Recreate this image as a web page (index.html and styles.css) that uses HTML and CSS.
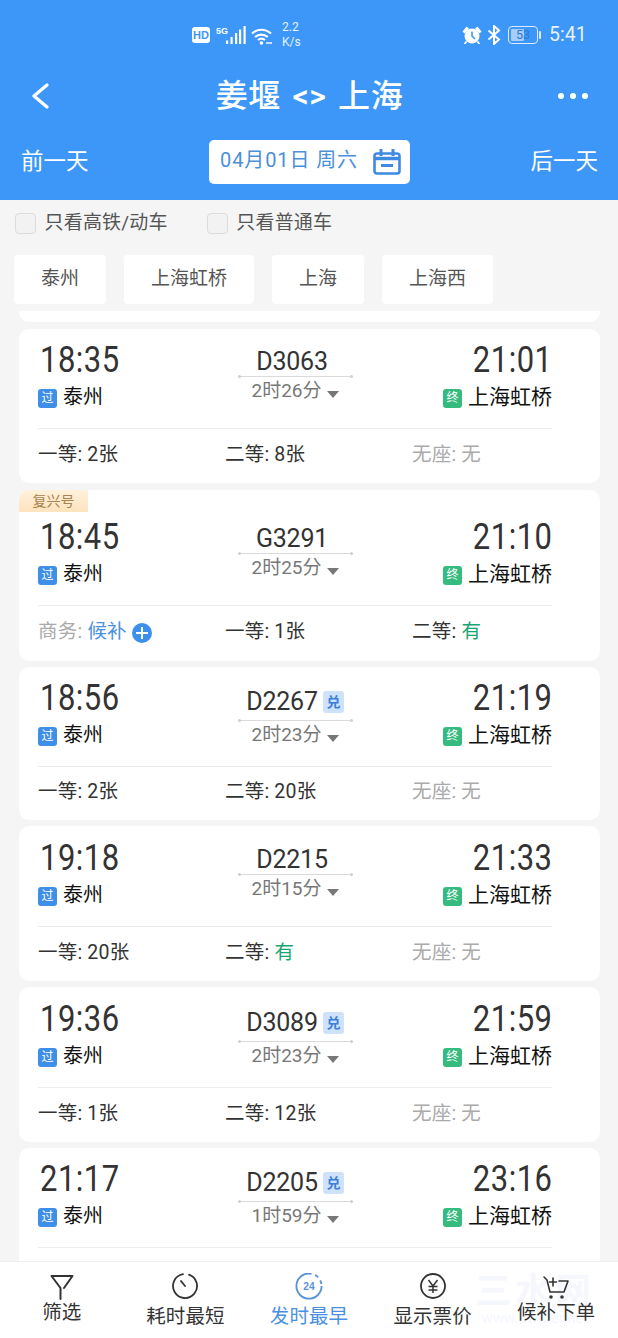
FILE: index.html
```html
<!DOCTYPE html>
<html lang="zh-CN">
<head>
<meta charset="utf-8">
<title>姜堰 &lt;&gt; 上海</title>
<link rel="stylesheet" href="styles.css">
</head>
<body>
<div class="app">
  <header class="header">
    <div class="status">
      <div class="status-left">
        <span class="hd">HD</span>
        <svg class="ic-signal" viewBox="0 0 30 18" width="30" height="18"><text x="0" y="7.500" class="five-g">5G</text><path d="M10 14.500h2.200V18H10zM14.500 11h2.200v7h-2.200zM19 7h2.200v11H19zM23 3.500h2.200V18H23zM27.500 0h2.200v18h-2.200z" fill="#fff"/></svg>
        <svg class="ic-wifi" viewBox="0 0 22 18" width="22" height="18" fill="none" stroke="#fff" stroke-width="2.200"><path d="M1 6.500c5.500-5 13-5 19 0M4 10c3.800-3.300 9-3.300 12.800 0M7 13c2-1.600 5-1.600 7 0"/><circle cx="10.500" cy="16" r="1.800" fill="#fff" stroke="none"/><path d="M15 16h6" stroke-width="1.400"/></svg>
        <div class="speed"><span>2.2</span><span>K/s</span></div>
      </div>
      <div class="status-right">
        <svg class="ic-alarm" viewBox="0 0 20 18" width="20" height="18"><path d="M0.500 5.500l4-5 2.500 2-4.500 5zM19.500 5.500l-4-5-2.500 2 4.500 5z" fill="#fff"/><circle cx="10" cy="10" r="7.500" fill="#fff"/><path d="M10 5.500V10l3 3" fill="none" stroke="#3d97f9" stroke-width="1.600"/><path d="M4.500 15.500l-2 2.500M15.500 15.500l2 2.500" stroke="#fff" stroke-width="1.800"/></svg>
        <svg class="ic-bt" viewBox="0 0 14 20" width="14" height="20" fill="none" stroke="#fff" stroke-width="2"><path d="M1.500 5.500L12 14.500 7 19V1l5 4.500-10.500 9"/></svg>
        <div class="battery"><div class="battery-body"><div class="battery-fill"></div><span>53</span></div><i class="battery-nub"></i></div>
        <span class="clock">5:41</span>
      </div>
    </div>
    <div class="titlebar">
      <svg class="ic-back" viewBox="0 0 18 26" width="18" height="26" fill="none" stroke="#fff" stroke-width="3.200" stroke-linecap="round" stroke-linejoin="round"><path d="M16 2L3 13l13 11"/></svg>
      <h1 class="title">姜堰 &lt;&gt; 上海</h1>
      <div class="more"><i></i><i></i><i></i></div>
    </div>
    <div class="datebar">
      <span class="day-link">前一天</span>
      <div class="date-box">
        <span class="date-text">04月01日 周六</span>
        <svg viewBox="0 0 28 26" width="28" height="26" fill="none" stroke="#3f8ae0" stroke-width="2.600"><rect x="1.500" y="4.500" width="25" height="20" rx="2.500"/><path d="M1.500 9.500h25" stroke-width="3.500"/><path d="M8 0v7M20 0v7" stroke-width="3"/><path d="M8 16.500h12" stroke-width="3"/></svg>
      </div>
      <span class="day-link">后一天</span>
    </div>
  </header>

  <div class="filters">
    <label class="check"><i class="box"></i>只看高铁/动车</label>
    <label class="check"><i class="box"></i>只看普通车</label>
  </div>

  <div class="tabs">
    <span class="tab">泰州</span>
    <span class="tab">上海虹桥</span>
    <span class="tab">上海</span>
    <span class="tab">上海西</span>
  </div>

  <main class="list">
    <div class="card-tail"></div>

    <article class="card">
      <div class="route">
        <div class="end"><div class="time">18:35</div><div class="station"><b class="mark pass">过</b>泰州</div></div>
        <div class="mid">
          <div class="train">D3063</div>
          <div class="duration">2时26分<i class="caret"></i></div>
        </div>
        <div class="end right"><div class="time">21:01</div><div class="station"><b class="mark final">终</b>上海虹桥</div></div>
      </div>
      <div class="seats"><span>一等: 2张</span><span>二等: 8张</span><span class="none">无座: 无</span></div>
    </article>

    <article class="card fuxing">
      <span class="tag">复兴号</span>
      <div class="route">
        <div class="end"><div class="time">18:45</div><div class="station"><b class="mark pass">过</b>泰州</div></div>
        <div class="mid">
          <div class="train">G3291</div>
          <div class="duration">2时25分<i class="caret"></i></div>
        </div>
        <div class="end right"><div class="time">21:10</div><div class="station"><b class="mark final">终</b>上海虹桥</div></div>
      </div>
      <div class="seats">
        <span class="none">商务: <em class="wait">候补</em><i class="plus"></i></span>
        <span>一等: 1张</span>
        <span>二等: <em class="have">有</em></span>
      </div>
    </article>

    <article class="card compact">
      <div class="route">
        <div class="end"><div class="time">18:56</div><div class="station"><b class="mark pass">过</b>泰州</div></div>
        <div class="mid">
          <div class="train with-badge">D2267<b class="redeem">兑</b></div>
          <div class="duration">2时23分<i class="caret"></i></div>
        </div>
        <div class="end right"><div class="time">21:19</div><div class="station"><b class="mark final">终</b>上海虹桥</div></div>
      </div>
      <div class="seats"><span>一等: 2张</span><span>二等: 20张</span><span class="none">无座: 无</span></div>
    </article>

    <article class="card low">
      <div class="route">
        <div class="end"><div class="time">19:18</div><div class="station"><b class="mark pass">过</b>泰州</div></div>
        <div class="mid">
          <div class="train">D2215</div>
          <div class="duration">2时15分<i class="caret"></i></div>
        </div>
        <div class="end right"><div class="time">21:33</div><div class="station"><b class="mark final">终</b>上海虹桥</div></div>
      </div>
      <div class="seats"><span>一等: 20张</span><span>二等: <em class="have">有</em></span><span class="none">无座: 无</span></div>
    </article>

    <article class="card low">
      <div class="route">
        <div class="end"><div class="time">19:36</div><div class="station"><b class="mark pass">过</b>泰州</div></div>
        <div class="mid">
          <div class="train with-badge">D3089<b class="redeem">兑</b></div>
          <div class="duration">2时23分<i class="caret"></i></div>
        </div>
        <div class="end right"><div class="time">21:59</div><div class="station"><b class="mark final">终</b>上海虹桥</div></div>
      </div>
      <div class="seats"><span>一等: 1张</span><span>二等: 12张</span><span class="none">无座: 无</span></div>
    </article>

    <article class="card">
      <div class="route">
        <div class="end"><div class="time">21:17</div><div class="station"><b class="mark pass">过</b>泰州</div></div>
        <div class="mid">
          <div class="train with-badge">D2205<b class="redeem">兑</b></div>
          <div class="duration">1时59分<i class="caret"></i></div>
        </div>
        <div class="end right"><div class="time">23:16</div><div class="station"><b class="mark final">终</b>上海虹桥</div></div>
      </div>
      <div class="seats"></div>
    </article>
  </main>

  <nav class="tabbar">
    <div class="watermark"><b>三水网</b><span>www.3water.net</span></div>
    <div class="nav-item raised">
      <svg viewBox="0 0 24 28" width="24" height="28" fill="none" stroke="#333" stroke-width="2" stroke-linejoin="round" stroke-linecap="round"><path d="M1.500 3h21L14 15M1.500 3L10.500 15v11"/></svg>
      <span>筛选</span>
    </div>
    <div class="nav-item">
      <svg viewBox="0 0 28 28" width="28" height="28" fill="none" stroke="#333" stroke-width="1.800" stroke-linecap="round"><path d="M12 1.200A12 12 0 1 0 18 1.700"/><path d="M10 8l4 5"/></svg>
      <span>耗时最短</span>
    </div>
    <div class="nav-item active">
      <svg viewBox="0 0 30 30" width="30" height="30" fill="none"><circle cx="15" cy="14" r="13.500" stroke="#5b93d8" stroke-width="2" stroke-dasharray="66 4 4 4 4 4"/><text x="15" y="18.500" class="nav-24">24</text></svg>
      <span>发时最早</span>
    </div>
    <div class="nav-item">
      <svg viewBox="0 0 28 28" width="28" height="28" fill="none" stroke="#333" stroke-width="1.800"><circle cx="14" cy="13" r="12"/><path d="M9.500 7l4.500 6 4.500-6M9.500 13.500h9M9.500 17h9M14 13v7" stroke-width="1.500"/></svg>
      <span>显示票价</span>
    </div>
    <div class="nav-item raised">
      <svg viewBox="0 0 28 28" width="28" height="28" fill="none" stroke="#333" stroke-width="1.600" stroke-linecap="round" stroke-linejoin="round"><path d="M2 4l3 3 3 12h14l4-11h-9"/><path d="M11 5v8M7.500 9h7"/><circle cx="9" cy="24" r="1" fill="#333"/><circle cx="20" cy="24" r="1" fill="#333"/></svg>
      <span>候补下单</span>
    </div>
  </nav>
</div>
</body>
</html>
```
FILE: styles.css
```css
* { box-sizing: border-box; }

html, body { margin: 0; padding: 0; }

body {
  font-family: Roboto, "Noto Sans CJK SC", sans-serif;
  background: #f5f5f5;
  color: #333;
}

.app {
  width: 618px;
  height: 1338px;
  display: flex;
  flex-direction: column;
  overflow: hidden;
}

/* Blue header: status bar, title row, date row */
.header {
  background: #3d97f9;
  color: #fff;
  height: 200px;
  flex: none;
}

.status {
  height: 68px;
  padding: 21px 34px 0 192px;
  display: flex;
  justify-content: space-between;
  align-items: flex-start;
}

.status-left { display: flex; align-items: flex-start; padding-top: 5px; }
.status-right { display: flex; align-items: center; height: 27px; }

.hd {
  width: 18px;
  height: 16px;
  margin-top: 1px;
  background: #fff;
  color: #3d97f9;
  border-radius: 3px;
  font: 700 11px/16px "Liberation Sans", sans-serif;
  text-align: center;
}

.ic-signal { margin-left: 6px; }
.five-g { font: 700 9px "Liberation Sans", sans-serif; fill: #fff; }
.ic-wifi { margin-left: 5px; margin-top: 1px; }

.speed {
  margin: -6px 0 0 9px;
  width: 18px;
  display: flex;
  flex-direction: column;
  font-size: 12px;
  line-height: 14px;
  color: #e6f1ff;
  gap: 1px;
}

.ic-alarm { margin-right: 5px; }
.ic-bt { margin-right: 7px; }

.battery { display: flex; align-items: center; }

.battery-body {
  position: relative;
  width: 30px;
  height: 18px;
  border: 1.5px solid #dcebff;
  border-radius: 4px;
  padding: 2px;
}

.battery-fill { width: 55%; height: 100%; background: #a8cdf8; border-radius: 1px; }

.battery-body span {
  position: absolute;
  inset: 0;
  text-align: center;
  font-size: 12.500px;
  line-height: 15px;
  color: #2f79cf;
}

.battery-nub { width: 2px; height: 8px; margin-left: 1px; background: #dcebff; border-radius: 1px; }

.clock { margin-left: 8px; width: 35px; font-size: 19.500px; color: #e6f1ff; white-space: nowrap; }

.titlebar {
  height: 56px;
  padding: 0 30px 0 31px;
  display: grid;
  grid-template-columns: 1fr auto 1fr;
  align-items: center;
}

.title {
  margin: 0;
  font-size: 32px;
  font-weight: 500;
  line-height: 56px;
  letter-spacing: .6px;
  word-spacing: 3px;
}

.more { display: flex; gap: 6px; justify-self: end; }
.more i { width: 6px; height: 6px; border-radius: 50%; background: #fff; }

.datebar {
  margin-top: 16px;
  height: 44px;
  padding: 0 20px 0 21px;
  display: flex;
  align-items: center;
  justify-content: space-between;
}

.day-link { font-size: 22.500px; line-height: 42px; height: 44px; }

.date-box {
  width: 201px;
  height: 44px;
  padding: 0 9px 0 11px;
  background: #fff;
  border-radius: 5px;
  display: flex;
  align-items: center;
  justify-content: space-between;
}

.date-text {
  font-size: 20px;
  line-height: 40px;
  height: 44px;
  letter-spacing: .9px;
  color: #4a8fd8;
  white-space: nowrap;
}

/* Train type checkboxes */
.filters {
  height: 55px;
  flex: none;
  padding: 0 15px 9px;
  display: flex;
  align-items: center;
  gap: 39px;
}

.check {
  display: flex;
  align-items: center;
  gap: 8.500px;
  font-size: 19px;
  line-height: 22px;
  height: 24px;
  letter-spacing: .2px;
  color: #555;
  white-space: nowrap;
}

.box {
  width: 21px;
  height: 21px;
  background: #f2f2f2;
  border: 1.5px solid #dcdcdc;
  border-radius: 4px;
}

/* Station shortcuts */
.tabs {
  flex: none;
  height: 49px;
  padding-left: 14px;
  display: flex;
  gap: 18px;
}

.tab {
  padding: 0 27px;
  background: #fff;
  border-radius: 4px;
  font-size: 19px;
  line-height: 47px;
  color: #555;
  white-space: nowrap;
}

/* Scrolling list of trains */
.list {
  flex: 1;
  min-height: 0;
  margin-top: 7px;
  padding: 0 18px 0 19px;
  overflow: hidden;
}

.card-tail {
  height: 11px;
  background: #fff;
  border-radius: 0 0 10px 10px;
}

.card {
  position: relative;
  margin-top: 6.500px;
  padding: 12px 48px 0 19px;
  height: 154.500px;
  background: #fff;
  border-radius: 10px;
}

.card.fuxing { padding-top: 28.500px; height: 171px; }
.card.compact { height: 152.500px; }
.card.low { padding-top: 13px; }

.tag {
  position: absolute;
  left: 0;
  top: 0;
  width: 69px;
  height: 22px;
  background: linear-gradient(#fff1dc, #fde3bd);
  border-radius: 10px 0 0 0;
  font-size: 14px;
  line-height: 22px;
  text-align: center;
  color: #a9834f;
}

.route {
  height: 88px;
  display: grid;
  grid-template-columns: 1fr 115px 1fr;
  border-bottom: 1px solid #ececec;
}

.time {
  padding-top: 1px;
  font-size: 36px;
  line-height: 36px;
  letter-spacing: .6px;
  color: #333;
  transform: scaleX(.86);
  transform-origin: left center;
  margin-left: 2px;
}

.right .time { margin-left: 0; transform-origin: right center; text-align: right; }

.station {
  margin-top: 5px;
  display: flex;
  align-items: center;
  font-size: 20px;
  line-height: 28px;
  color: #111;
}

.right .station { justify-content: flex-end; font-size: 21px; }

.mark {
  width: 19px;
  height: 19px;
  margin: 3px 6px 0 0;
  border-radius: 3px;
  font-size: 12px;
  font-weight: 400;
  line-height: 19px;
  text-align: center;
  color: #fff;
}

.pass { background: #3f8fe8; }
.final { background: #36bb7f; }

.mid { display: flex; flex-direction: column; align-items: center; }

.train {
  position: relative;
  width: 100%;
  height: 36px;
  padding: 7px 6px 0 0;
  display: flex;
  justify-content: center;
  align-items: center;
  gap: 5px;
  border-bottom: 1px solid #dadada;
  font-size: 25px;
  line-height: 30px;
  color: #333;
  letter-spacing: -.2px;
}

.train::before, .train::after {
  content: "";
  position: absolute;
  bottom: -2px;
  width: 3px;
  height: 3px;
  border-radius: 50%;
  background: #cfcfcf;
}

.train::before { left: 0; }
.train::after { right: 0; }

.train.with-badge { height: 42px; padding: 4px 0 0 0; }

.redeem {
  width: 21px;
  height: 22px;
  margin-top: 1px;
  background: #cfe2fb;
  border-radius: 3px;
  font-size: 14px;
  line-height: 22px;
  text-align: center;
  color: #3d7fd6;
}

.duration {
  display: flex;
  align-items: center;
  font-size: 19px;
  line-height: 28px;
  color: #777;
  white-space: nowrap;
}

.caret {
  margin: 7px 0 0 5px;
  width: 0;
  height: 0;
  border-left: 6px solid transparent;
  border-right: 6px solid transparent;
  border-top: 7px solid #777;
}

.seats {
  margin-right: -48px;
  padding-top: 11px;
  display: grid;
  grid-template-columns: 187px 187px 1fr;
  font-size: 19.500px;
  line-height: 30px;
  letter-spacing: .2px;
  color: #333;
}

.compact .seats { padding-top: 10px; }

.seats span { display: flex; align-items: center; white-space: pre; }
.seats .none { color: #aaa; }
.seats em { font-style: normal; }
.wait { color: #4a90e2; }
.have { color: #17a673; }

.plus {
  position: relative;
  width: 20px;
  height: 20px;
  margin: 2px 0 0 5px;
  border-radius: 50%;
  background: #3d8fee;
}

.plus::before, .plus::after {
  content: "";
  position: absolute;
  background: #fff;
  left: 4px;
  right: 4px;
  top: 9px;
  height: 2px;
}

.plus::after { left: 9px; right: 9px; top: 4px; width: 2px; height: 12px; }

/* Bottom sort and filter bar */
.tabbar {
  position: relative;
  flex: none;
  height: 77px;
  background: #fff;
  display: grid;
  grid-template-columns: repeat(5, 123.600px);
  border-top: 1px solid #f0f0f0;
}

.nav-item {
  position: relative;
  display: flex;
  flex-direction: column;
  align-items: center;
  padding-top: 11px;
  font-size: 19.500px;
  line-height: 26px;
  letter-spacing: .1px;
  color: #333;
}

.nav-item svg { height: 28px; margin-bottom: 3px; flex: none; }
.nav-item.raised span { margin-top: -4px; }
.nav-item.active { color: #4a90e2; }
.nav-24 { font: 700 11px "Liberation Sans", sans-serif; fill: #5b93d8; text-anchor: middle; }

.watermark {
  position: absolute;
  right: 23px;
  top: 12px;
  width: 120px;
  display: flex;
  flex-direction: column;
  align-items: center;
  color: #f5f7fc;
}

.watermark b { font-size: 36px; line-height: 36px; font-weight: 700; letter-spacing: 4px; white-space: nowrap; }
.watermark span { font-size: 15px; line-height: 16px; white-space: nowrap; }
```
